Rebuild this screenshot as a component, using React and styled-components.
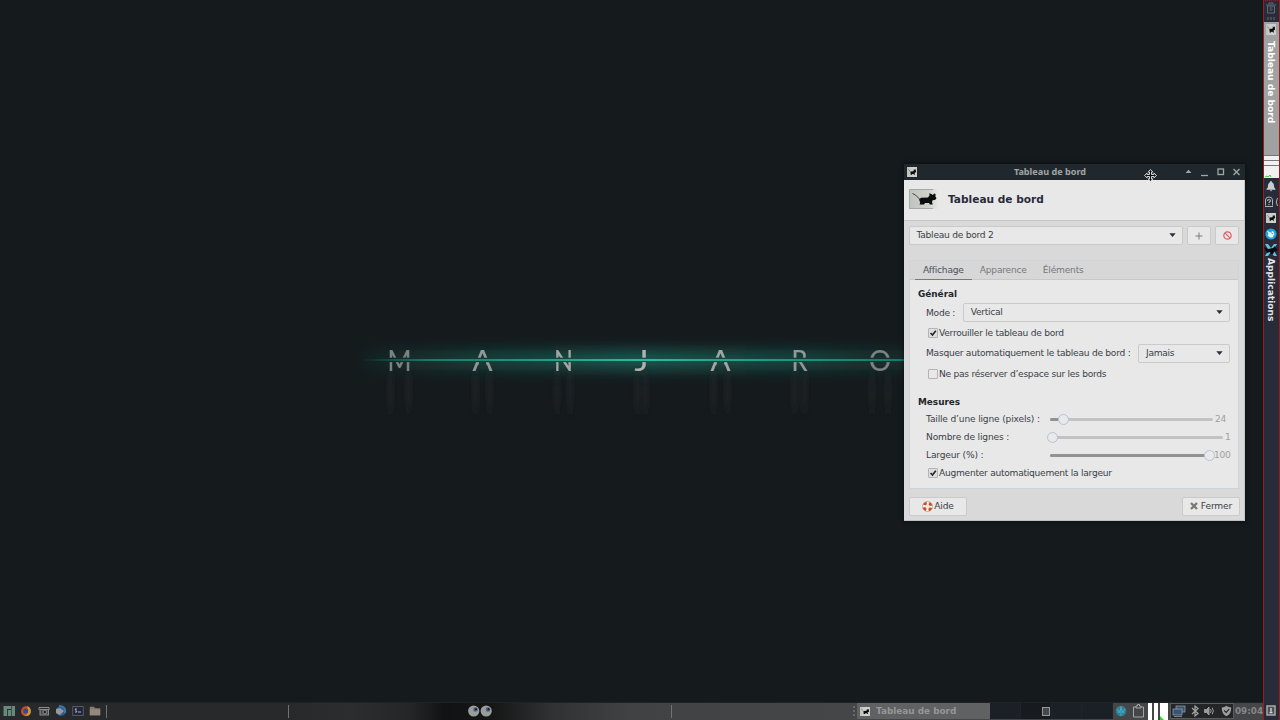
import React, { useState } from "react";
import styled, { createGlobalStyle, css } from "styled-components";

const GlobalStyle = createGlobalStyle`
  * {
    box-sizing: border-box;
  }
  body {
    margin: 0;
    overflow: hidden;
    background: #151a1d;
    font-family: "DejaVu Sans", sans-serif;
    font-size: 9.1px;
    color: #3a3f47;
  }
  svg {
    display: block;
    flex: none;
  }
`;

const Desktop = styled.div`
  position: relative;
  display: flex;
  width: 1280px;
  height: 720px;
  background: #151a1d;
  overflow: hidden;
`;
const Workspace = styled.div`
  display: flex;
  flex-direction: column;
  width: 1263px;
`;
const Wallpaper = styled.div`
  height: 702px;
  background: #151a1d;
`;

const BottomPanel = styled.div`
  display: flex;
  align-items: center;
  height: 18px;
  padding-bottom: 1px;
  border-top: 1px solid #1d2326;
  background: linear-gradient(
    90deg,
    #27292a 0,
    #28292a 290px,
    #2c2d2e 350px,
    #252627 410px,
    #111213 445px,
    #151616 492px,
    #303132 550px,
    #414243 630px,
    #454647 850px
  );
`;
const Launchers = styled.div`
  display: flex;
  align-items: center;
  gap: 5.3px;
  width: 106px;
  padding-left: 3px;
`;
const Separator = styled.div`
  width: 1px;
  height: 13px;
  margin-right: ${(props) => props.$after}px;
  background: #717273;
`;
const Eyes = styled.div`
  width: 24px;
  margin-right: 179px;
`;
const Handle = styled.div`
  width: 4px;
  height: 10px;
  border-left: 2px dotted #66686a;
`;
const TaskButton = styled.div`
  display: flex;
  align-items: center;
  width: 133px;
  height: 16px;
  gap: 6px;
  padding-left: 3px;
  background: #606162;
  color: #969798;
  font-size: 8.9px;
  font-weight: bold;
`;
const Pager = styled.div`
  display: flex;
  width: 123px;
  height: 16px;
`;
const PagerCell = styled.div`
  display: flex;
  flex: 1;
  align-items: center;
  justify-content: flex-end;
  padding-right: 1px;
  border-right: 1px solid #20242a;
  background: ${(props) => (props.$active ? "#171a1e" : "#1b1f26")};
`;
const MiniWindow = styled.div`
  width: 8px;
  height: 9px;
  border: 1px solid #96989a;
  background: #45494d;
`;
const PanelItem = styled.div`
  display: flex;
  align-items: center;
  justify-content: center;
  width: ${(props) => props.$w}px;
  height: 16px;
`;
const Load = styled.div`
  display: flex;
  gap: 1px;
  width: 23px;
  height: 17px;
  padding-left: 1px;
`;
const Bar = styled.div`
  width: ${(props) => props.$w}px;
  background: #fff;
  margin-left: ${(props) => props.$gap || 0}px;
`;
const Tray = styled.div`
  display: flex;
  align-items: center;
  justify-content: space-between;
  width: 64px;
  height: 16px;
  padding: 0 1px;
  border: 1px solid #5a5c5e;
  background: #232527;
`;
const Clock = styled.div`
  width: 28px;
  padding-left: 1px;
  color: #858789;
  font-size: 8.8px;
  font-weight: bold;
`;

const SidePanel = styled.div`
  display: flex;
  flex-direction: column;
  align-items: center;
  width: 17px;
  height: 720px;
  background: #282c39;
  border: 1px solid #9c1a20;
  border-top-style: dotted;
  border-bottom: 0;
`;
const SideIcon = styled.div`
  display: flex;
  align-items: center;
  justify-content: center;
  width: 15px;
  height: ${(props) => props.$h || 16}px;
  padding-right: 1px;
  flex: none;
`;
const SideTask = styled.div`
  display: flex;
  flex-direction: column;
  align-items: center;
  gap: 6px;
  width: 15px;
  height: 133px;
  padding: 2px 1px 0 0;
  background: #a0a1a1;
  flex: none;
`;
const VerticalText = styled.div`
  writing-mode: vertical-rl;
  line-height: 11px;
  margin-right: 2px;
  color: ${(props) => props.$color};
  font-size: 9.1px;
  font-weight: bold;
`;
const SideLoad = styled.div`
  display: flex;
  flex-direction: column;
  width: 15px;
  height: 23px;
  background: #fff;
  flex: none;
`;
const LoadRow = styled.div`
  height: ${(props) => props.$h}px;
  border-top: 1px solid #777;
  background: #f1f1f1;
`;
const SideFooter = styled.div`
  margin-top: auto;
  height: 17px;
  padding: 2px 1px 0 0;
`;

const Window = styled.div`
  position: absolute;
  left: 904px;
  top: 164px;
  width: 341px;
  height: 357px;
  background: #d9d9d9;
  border-right: 1px solid #c3c6c9;
  border-bottom: 1px solid #bfc2c3;
  box-shadow: 0 0 4px 1px rgba(0, 0, 0, 0.45);
  letter-spacing: -0.26px;
`;
const TitleBar = styled.div`
  display: flex;
  align-items: center;
  width: 341px;
  height: 16px;
  padding: 0 4px 0 3px;
  background: #20282d;
  color: #a0a5a6;
  font-family: "Noto Sans", sans-serif;
  font-size: 9.1px;
  line-height: 12px;
  font-weight: bold;
  letter-spacing: 0;
`;
const TitleText = styled.div`
  flex: 1;
  text-align: center;
  padding: 0 2px 0 0;
`;
const Header = styled.div`
  display: flex;
  align-items: center;
  height: 41px;
  gap: 9px;
  padding: 0 5px 2px;
  background: #e8e8e8;
  border-bottom: 1px solid #c6c6c6;
  color: #292b3b;
  font-size: 10.6px;
  line-height: 12px;
  font-weight: bold;
  letter-spacing: 0;
`;
const field = css`
  display: flex;
  align-items: center;
  height: 19px;
  border: 1px solid #cacaca;
  border-radius: 2px;
  background: #e8e8e8;
`;
const Toolbar = styled.div`
  display: flex;
  gap: 4px;
  padding: 5px 4px 0 5px;
`;
const Select = styled.div`
  ${field}
  justify-content: space-between;
  width: ${(props) => props.$w}px;
  padding: 0 6.500px 1px 6.500px;
`;
const ToolButton = styled.button`
  ${field}
  justify-content: center;
  width: 24px;
  padding: 0;
`;
const Notebook = styled.div`
  width: 330px;
  height: 229px;
  margin: 15px 0 0 5px;
  border: 1px solid #cfd3dc;
  background: #e8e8e8;
`;
const Tabs = styled.div`
  display: flex;
  height: 19px;
  padding-left: 5px;
  background: #d7d7d7;
  border-bottom: 1px solid #c8c8c8;
`;
const Tab = styled.div`
  height: 19px;
  padding: 0 8px;
  line-height: 19px;
  letter-spacing: -0.2px;
  color: ${(props) => (props.$active ? "#4d5060" : "#77787c")};
  border-bottom: 1px solid ${(props) => (props.$active ? "#7a7a7a" : "transparent")};
`;
const Page = styled.div`
  padding: 6px 8px 0;
`;
const Heading = styled.div`
  height: ${(props) => props.$h}px;
  line-height: 17px;
  margin-top: ${(props) => props.$top || 0}px;
  color: #23262b;
  font-size: 8.9px;
  font-weight: bold;
  letter-spacing: 0;
`;
const Row = styled.div`
  display: flex;
  align-items: center;
  height: ${(props) => props.$h}px;
  padding-left: ${(props) => (props.$check ? 9.5 : 8)}px;
  gap: ${(props) => props.$gap || 0}px;
  white-space: nowrap;
`;
const Label = styled.div`
  width: ${(props) => (props.$w ? props.$w + "px" : "auto")};
  letter-spacing: ${(props) => (props.$w ? "-0.17px" : "inherit")};
  flex: none;
`;
const Box = styled.span`
  width: 10px;
  height: 10px;
  margin-right: 1.500px;
  border: 1px solid #b4b4b4;
  border-radius: 1px;
  background: ${(props) => (props.$on ? "#dedede" : "#e8e8e8")};
`;
const Track = styled.div`
  position: relative;
  flex: none;
  height: 3px;
  width: ${(props) => props.$w}px;
  border-radius: 2px;
  background: #c2c2c2;
`;
const Fill = styled.div`
  height: 3px;
  border-radius: 2px;
  background: #929292;
`;
const Knob = styled.div`
  position: absolute;
  top: -4px;
  width: 11px;
  height: 11px;
  margin-left: -5px;
  border: 1px solid #bcc0d8;
  border-radius: 50%;
  background: #e9e9e9;
`;
const Value = styled.div`
  margin-left: ${(props) => props.$gap}px;
  color: #a0a0a0;
`;
const Footer = styled.div`
  display: flex;
  justify-content: space-between;
  padding: 8px 4px 0 5px;
`;
const FooterButton = styled.button`
  ${field}
  justify-content: center;
  gap: ${(props) => props.$gap}px;
  width: 58px;
  padding: 0 0 1px;
  color: #3a3f47;
  font-family: inherit;
  font-size: inherit;
  letter-spacing: -0.1px;
`;
const Pointer = styled.div`
  position: absolute;
  left: 1144px;
  top: 169px;
`;

const letters = [
  { char: "M", x: 399.5, w: 22, opacity: 0.65 },
  { char: "A", x: 482.5, w: 18, opacity: 0.8 },
  { char: "N", x: 563.5, w: 17, opacity: 0.9 },
  { char: "J", x: 641.5, w: 12, opacity: 1 },
  { char: "A", x: 720.5, w: 18, opacity: 0.9 },
  { char: "R", x: 799.5, w: 14, opacity: 0.8 },
  { char: "O", x: 880, w: 20, opacity: 0.65 },
];

function WallpaperLogo() {
  return (
    <svg width="1263" height="702">
      <defs>
        <linearGradient id="beam" x1="362" x2="920" y1="0" y2="0" gradientUnits="userSpaceOnUse">
          <stop offset="0" stopColor="#12836e" stopOpacity="0" />
          <stop offset=".12" stopColor="#157a68" />
          <stop offset=".5" stopColor="#24bda0" />
          <stop offset=".9" stopColor="#148470" />
          <stop offset="1" stopColor="#127565" />
        </linearGradient>
        <linearGradient id="glow" x1="362" x2="920" y1="0" y2="0" gradientUnits="userSpaceOnUse">
          <stop offset="0" stopColor="#186457" stopOpacity=".1" />
          <stop offset=".2" stopColor="#186457" stopOpacity=".5" />
          <stop offset=".5" stopColor="#1a6e60" stopOpacity=".75" />
          <stop offset=".8" stopColor="#186457" stopOpacity=".55" />
          <stop offset="1" stopColor="#186457" stopOpacity=".2" />
        </linearGradient>
        <linearGradient id="fade" x1="0" x2="0" y1="371" y2="420" gradientUnits="userSpaceOnUse">
          <stop offset="0" stopColor="#33383a" stopOpacity=".1" />
          <stop offset=".4" stopColor="#33383a" stopOpacity=".3" />
          <stop offset="1" stopColor="#33383a" stopOpacity="0" />
        </linearGradient>
        <filter id="soft" x="-50%" y="-10%" width="200%" height="120%">
          <feGaussianBlur stdDeviation="2.2 4" />
        </filter>
        <filter id="haze" x="-10%" y="-200%" width="120%" height="500%">
          <feGaussianBlur stdDeviation="8 7" />
        </filter>
        <mask id="bars" maskUnits="userSpaceOnUse" x="360" y="340" width="560" height="40">
          <rect x="360" y="340" width="560" height="40" fill="#fff" />
          <path d="M482.5 354l-6.600 17.500h13.200zM720.5 354l-6.600 17.500h13.200z" fill="#000" />
          <rect x="360" y="357.7" width="560" height="4.4" fill="#000" />
        </mask>
      </defs>
      <rect x="365" y="350" width="550" height="20" fill="url(#glow)" filter="url(#haze)" />
      <g filter="url(#soft)" fill="url(#fade)">
        {letters.map((letter) => (
          <g key={letter.x}>
            <rect x={letter.x - letter.w / 2 - 1} y="371" width="6" height="48" />
            <rect x={letter.x + letter.w / 2 - 5} y="371" width="6" height="48" />
          </g>
        ))}
      </g>
      <g
        mask="url(#bars)"
        fill="#b2b2b2"
        stroke="#b2b2b2"
        strokeWidth=".2"
        fontFamily="Lato, sans-serif"
        fontSize="29"
      >
        {letters.map((letter) => (
          <text
            key={letter.x}
            x={letter.x - letter.w / 2 - 1}
            y="370.7"
            opacity={letter.opacity}
            textLength={letter.w + 2}
            lengthAdjust="spacingAndGlyphs"
          >
            {letter.char}
          </text>
        ))}
      </g>
      <rect x="362" y="359" width="558" height="2" fill="url(#beam)" />
    </svg>
  );
}

function Mouse({ width = 11, height = 10, light }) {
  return (
    <svg width={width} height={height} viewBox="0 0 30 20" preserveAspectRatio="none">
      <defs>
        <linearGradient id={light ? "plateFade" : "plate"}>
          <stop offset="0" stopColor="#bfc4be" />
          <stop offset=".65" stopColor="#cfd2cd" />
          <stop offset="1" stopColor={light ? "#e8e8e8" : "#c9cbc9"} />
        </linearGradient>
      </defs>
      <rect width="30" height="20" fill={light ? "url(#plateFade)" : "url(#plate)"} />
      {light && <path d="M24 .5H.5v19H24" fill="none" stroke="#a6aaa6" />}
      <path
        d="M10 10.500l2-1.700 7-.3 1.500-2-.2-2.300 2 .8 1.500 1 1.500-1.500 1.300.7-.2 2.300 1.100 1.700-1.500 1.800-2.500.2-.5 2 .8 2.300h-3l-.8-1.500h-4l-1 1.500h-4.500l.7-2z"
        fill="#0b0c0c"
      />
      <path d="M3.500 4.500l3 1.500 4.500 4.500" fill="none" stroke="#333" strokeWidth=".9" />
    </svg>
  );
}

function Arrow() {
  return (
    <svg width="7" height="4">
      <path d="M.3.3h6.400L3.500 3.900z" fill="#2a2f3e" />
    </svg>
  );
}

function Dropdown({ value, width }) {
  return (
    <Select $w={width}>
      {value}
      <Arrow />
    </Select>
  );
}

function Checkbox({ label, height, initial }) {
  const [checked, setChecked] = useState(initial);
  return (
    <Row $h={height} $check onClick={() => setChecked(!checked)}>
      <Box $on={checked}>
        {checked && (
          <svg width="8" height="8" viewBox="0 0 8 8">
            <path d="M1.500 4l2 2L6.800 1.700" fill="none" stroke="#22252a" strokeWidth="1.600" />
          </svg>
        )}
      </Box>
      {label}
    </Row>
  );
}

function Slider({ label, value, width, position, gap }) {
  return (
    <Row $h={18}>
      <Label $w={124}>{label}</Label>
      <Track $w={width}>
        <Fill style={{ width: position }} />
        <Knob style={{ left: position }} />
      </Track>
      <Value $gap={gap}>{value}</Value>
    </Row>
  );
}

function SettingsWindow() {
  const [tab, setTab] = useState("Affichage");
  return (
    <Window>
      <TitleBar>
        <Mouse width={10} height={10} />
        <TitleText>Tableau de bord</TitleText>
        <svg width="56" height="12" viewBox="0 0 56 12" fill="none" stroke="#a0a6a7">
          <path d="M.500 7L3.500 3.800 6.500 7z" fill="#a0a6a7" stroke="none" />
          <path d="M16 9.500h7" strokeWidth="1.300" />
          <rect x="33" y="3" width="5.500" height="5.500" strokeWidth="1.300" />
          <path d="M48.500 3l6 6m0-6l-6 6" strokeWidth="1.400" />
        </svg>
      </TitleBar>
      <Header>
        <Mouse width={30} height={20} light />
        Tableau de bord
      </Header>
      <Toolbar>
        <Dropdown value="Tableau de bord 2" width={274} />
        <ToolButton>
          <svg width="8" height="8">
            <path d="M4 .5v7M.5 4h7" stroke="#7d7d7d" />
          </svg>
        </ToolButton>
        <ToolButton>
          <svg width="9" height="9" fill="none" stroke="#e35d60" strokeWidth="1.200">
            <circle cx="4.500" cy="4.500" r="3.700" />
            <path d="M1.900 1.900l5.200 5.200" />
          </svg>
        </ToolButton>
      </Toolbar>
      <Notebook>
        <Tabs>
          {["Affichage", "Apparence", "Éléments"].map((name) => (
            <Tab key={name} $active={tab === name} onClick={() => setTab(name)}>
              {name}
            </Tab>
          ))}
        </Tabs>
        <Page>
          <Heading $h={16}>Général</Heading>
          <Row $h={21} $gap={8}>
            <Label>Mode :</Label>
            <Dropdown value="Vertical" width={267} />
          </Row>
          <Checkbox height={19} label="Verrouiller le tableau de bord" initial />
          <Row $h={22} $gap={8}>
            <Label>Masquer automatiquement le tableau de bord :</Label>
            <Dropdown value="Jamais" width={92} />
          </Row>
          <Checkbox height={19} label="Ne pas réserver d’espace sur les bords" initial={false} />
          <Heading $h={16} $top={11}>
            Mesures
          </Heading>
          <Slider label="Taille d’une ligne (pixels) :" value="24" width={163} position={13} gap={2} />
          <Slider label="Nombre de lignes :" value="1" width={173} position={2} gap={2} />
          <Slider label="Largeur (%) :" value="100" width={160} position={159} gap={4} />
          <Checkbox height={18} label="Augmenter automatiquement la largeur" initial />
        </Page>
      </Notebook>
      <Footer>
        <FooterButton $gap={1}>
          <svg width="11" height="11" viewBox="0 0 11 11" fill="none">
            <circle cx="5.500" cy="5.500" r="3.600" stroke="#f6f6f6" strokeWidth="2.600" />
            <circle cx="5.500" cy="5.500" r="5" stroke="#b8674a" strokeWidth=".5" />
            <circle
              cx="5.500"
              cy="5.500"
              r="3.600"
              stroke="#c84c22"
              strokeWidth="2.600"
              strokeDasharray="3.200 2.455"
              transform="rotate(19.500 5.500 5.500)"
            />
          </svg>
          Aide
        </FooterButton>
        <FooterButton $gap={3}>
          <svg width="8" height="8">
            <path d="M1 1l6 6m0-6L1 7" stroke="#777a74" strokeWidth="2.300" />
          </svg>
          Fermer
        </FooterButton>
      </Footer>
    </Window>
  );
}

function TaskBar() {
  return (
    <BottomPanel>
      <Launchers>
        <svg width="12" height="12">
          <path d="M.5 1H8v3H4v7H.5zM4.800 5H8v6H4.800zM8.600 1H12v10H8.600z" fill="#65897a" />
        </svg>
        <svg width="12" height="12">
          <circle cx="6" cy="6.200" r="5" fill="#c84b2c" />
          <path d="M7 1c3 1 4.500 4 3.500 7S6 11.500 4 10c4 0 5-3 3-9z" fill="#c99a35" />
          <circle cx="5.700" cy="6" r="2.500" fill="#344b93" />
        </svg>
        <svg width="12" height="12" fill="none" stroke="#8b8c8b">
          <path d="M1 2.500h3M1 5V2.500h10V5" />
          <rect x="2" y="4.500" width="8.500" height="5.500" fill="#4c4d4d" />
          <circle cx="6.800" cy="7" r="1.800" fill="#222" />
        </svg>
        <svg width="12" height="12">
          <circle cx="6" cy="6" r="5" fill="#305b8c" />
          <path d="M1 4l4-1 4 3-4 4-4-2z" fill="#929aa2" />
          <path d="M4 1c4 0 7 2 6 7" fill="none" stroke="#3d78ad" strokeWidth="2" />
        </svg>
        <svg width="12" height="12" fill="none">
          <rect x=".7" y="1.500" width="10.600" height="9" fill="#22263a" stroke="#55576a" />
          <path d="M5 4H3l2 3H3m3 0h3" stroke="#adb0b3" />
        </svg>
        <svg width="12" height="12">
          <path d="M.8 1.800H5l1 1.500h5.200v7H.8z" fill="#877b6c" />
          <path d="M.8 4.500h10.400v5.800H.8z" fill="#94897a" />
        </svg>
      </Launchers>
      <Separator $after={181} />
      <Separator $after={179} />
      <Eyes>
        <svg width="24" height="13">
          <circle cx="5.700" cy="6" r="5.600" fill="#9c9c9b" />
          <circle cx="18.200" cy="6" r="5.600" fill="#9c9c9b" />
          <circle cx="7.500" cy="4.500" r="2.300" fill="#46638c" />
          <circle cx="20" cy="4.500" r="2.300" fill="#46638c" />
          <circle cx="8" cy="4.200" r="1" fill="#16191f" />
          <circle cx="20.500" cy="4.200" r="1" fill="#16191f" />
        </svg>
      </Eyes>
      <Separator $after={181} />
      <Handle />
      <TaskButton>
        <Mouse width={10} height={9} />
        Tableau de bord
      </TaskButton>
      <Pager>
        <PagerCell />
        <PagerCell $active>
          <MiniWindow />
        </PagerCell>
        <PagerCell />
        <PagerCell />
      </Pager>
      <PanelItem $w={16}>
        <svg width="12" height="12" fill="none">
          <circle cx="6" cy="6" r="5.300" fill="#298398" />
          <path d="M2.500 4l1.500 4 2-5 2 5 1.500-4M6 1v10" stroke="#64b2bd" strokeWidth=".7" />
        </svg>
      </PanelItem>
      <PanelItem $w={18}>
        <svg width="13" height="14" fill="none" stroke="#a2a4a5">
          <path d="M4 3H1.500v10h10V3H9" />
          <path d="M4 4V2h1.500V.5h2V2H9v2z" />
        </svg>
      </PanelItem>
      <Load>
        <Bar $w={4} />
        <Bar $w={4} $gap={0.5} />
        <Bar $w={8} $gap={1}>
          <svg width="8" height="17">
            <path d="M0 17v-4l4 4z" fill="#18e818" />
          </svg>
        </Bar>
      </Load>
      <Tray>
        <svg width="14" height="12" fill="#365477" stroke="#a1a6aa" strokeWidth=".7">
          <rect x="4" y="1" width="9" height="6" />
          <rect x="1" y="4" width="9" height="6" />
          <path d="M2 11.500h8" />
        </svg>
        <svg width="8" height="12" fill="none" stroke="#a4a6a7" strokeWidth="1.200">
          <path d="M1 3l6 5.500-3 2.500V1l3 2.500L1 9" />
        </svg>
        <svg width="13" height="12" fill="none" stroke="#999b9d">
          <path d="M1.500 4.500h2L6 2v8L3.500 7.500h-2z" fill="#999b9d" />
          <path d="M7.500 4q1.300 2 0 4M9.300 2.700q2 3.300 0 6.600" />
        </svg>
        <svg width="11" height="12">
          <path d="M5.500.8c1.800 1.300 3 1.600 4.700 1.700 0 4-1 7-4.700 8.800C1.800 9.500.8 6.500.8 2.500 2.500 2.400 3.700 2.100 5.500.8z" fill="#9b9ea0" />
          <path d="M3.200 5.500l2 2 3-3.300" fill="none" stroke="#282a2d" strokeWidth="1.200" />
        </svg>
      </Tray>
      <Clock>09:04</Clock>
    </BottomPanel>
  );
}

function SideBar() {
  return (
    <SidePanel>
      <SideIcon $h={14}>
        <svg width="10" height="12" fill="none" stroke="#656874">
          <path d="M0 3h10M3 2V1h4v1M1.500 4v7h7V4z" />
          <path d="M3.500 5h3v4h-3z" fill="#464a56" stroke="none" />
        </svg>
      </SideIcon>
      <SideIcon $h={7}>
        <svg width="8" height="3">
          <path d="M1 0v3M4 0v3M7 0v3" stroke="#666b73" />
        </svg>
      </SideIcon>
      <SideTask>
        <Mouse width={10} height={11} />
        <VerticalText $color="#fff">Tableau de bord</VerticalText>
      </SideTask>
      <SideLoad>
        <LoadRow $h={5} />
        <LoadRow $h={5} />
        <LoadRow $h={13}>
          <svg width="15" height="12">
            <path d="M1 11l2-1 1 1 2-2 1 2" fill="none" stroke="#28dc28" />
          </svg>
        </LoadRow>
      </SideLoad>
      <SideIcon>
        <svg width="10" height="12" fill="#c9cbcf">
          <path d="M4.300 1h1.400v1C8 3 8 5 8.200 7.500L9.500 9v.7h-9V9l1.300-1.500C2 5 2 3 4.300 2zM3.800 10.300h2.400L5 11.500z" />
        </svg>
      </SideIcon>
      <SideIcon>
        <svg width="14" height="12" fill="none" stroke="#acafb6">
          <path d="M1.500 9.500V4a3.500 3 0 017 0v5.500" />
          <path d="M1 10.500h8" />
          <path d="M3.500 5q0-1.500 1.500-1.500T6.500 5Q5 6 5 7m0 1v1" strokeWidth="1.200" />
          <path d="M13.500 2q-2.500 4 0 8" />
        </svg>
      </SideIcon>
      <SideIcon>
        <Mouse width={10} height={10} />
      </SideIcon>
      <SideIcon>
        <svg width="12" height="12">
          <circle cx="6" cy="6" r="5.600" fill="#20a3dc" />
          <path d="M2 2.500l3 2 3-1.500 1.500 3-2 3.500H5L2.500 7.500l1-1.500z" fill="#e6f5fb" />
          <path d="M6 4.500l2 1.500" fill="none" stroke="#20a3dc" />
        </svg>
      </SideIcon>
      <SideIcon>
        <svg width="14" height="14">
          <path d="M1 1h3l3 4 3-4h3L9.500 7l3.500 6h-3L7 9l-3 4H1l3.500-6z" fill="#65bde4" />
          <path d="M0 4l4 2 5-1 2-2 1 2 2 2-4 2-1 2H7L6 9 3 10z" fill="#080a0c" />
        </svg>
      </SideIcon>
      <VerticalText $color="#e3e4e6">Applications</VerticalText>
      <SideFooter>
        <svg width="10" height="11" fill="none">
          <rect x="1" y="1" width="8" height="9" fill="#4c4f54" stroke="#a8aaab" strokeWidth="1.500" />
          <path d="M3.500 7.500h3M5 3v3.500" stroke="#d5d5d5" strokeWidth="1.400" />
        </svg>
      </SideFooter>
    </SidePanel>
  );
}

export default function App() {
  return (
    <Desktop>
      <GlobalStyle />
      <Workspace>
        <Wallpaper>
          <WallpaperLogo />
        </Wallpaper>
        <TaskBar />
      </Workspace>
      <SideBar />
      <SettingsWindow />
      <Pointer>
        <svg width="13" height="13" viewBox="0 0 13 13">
          <path
            d="M6.500.5l2.300 2.600H7.500v2.400h2.400V4.200l2.600 2.300-2.600 2.300V7.500H7.500v2.400h1.300l-2.300 2.600-2.300-2.600h1.300V7.500H3.100v1.300L.5 6.500l2.600-2.300v1.300h2.400V3.100H4.200z"
            fill="#0b0c0d"
            stroke="#f1f1f1"
            strokeWidth=".9"
          />
        </svg>
      </Pointer>
    </Desktop>
  );
}
